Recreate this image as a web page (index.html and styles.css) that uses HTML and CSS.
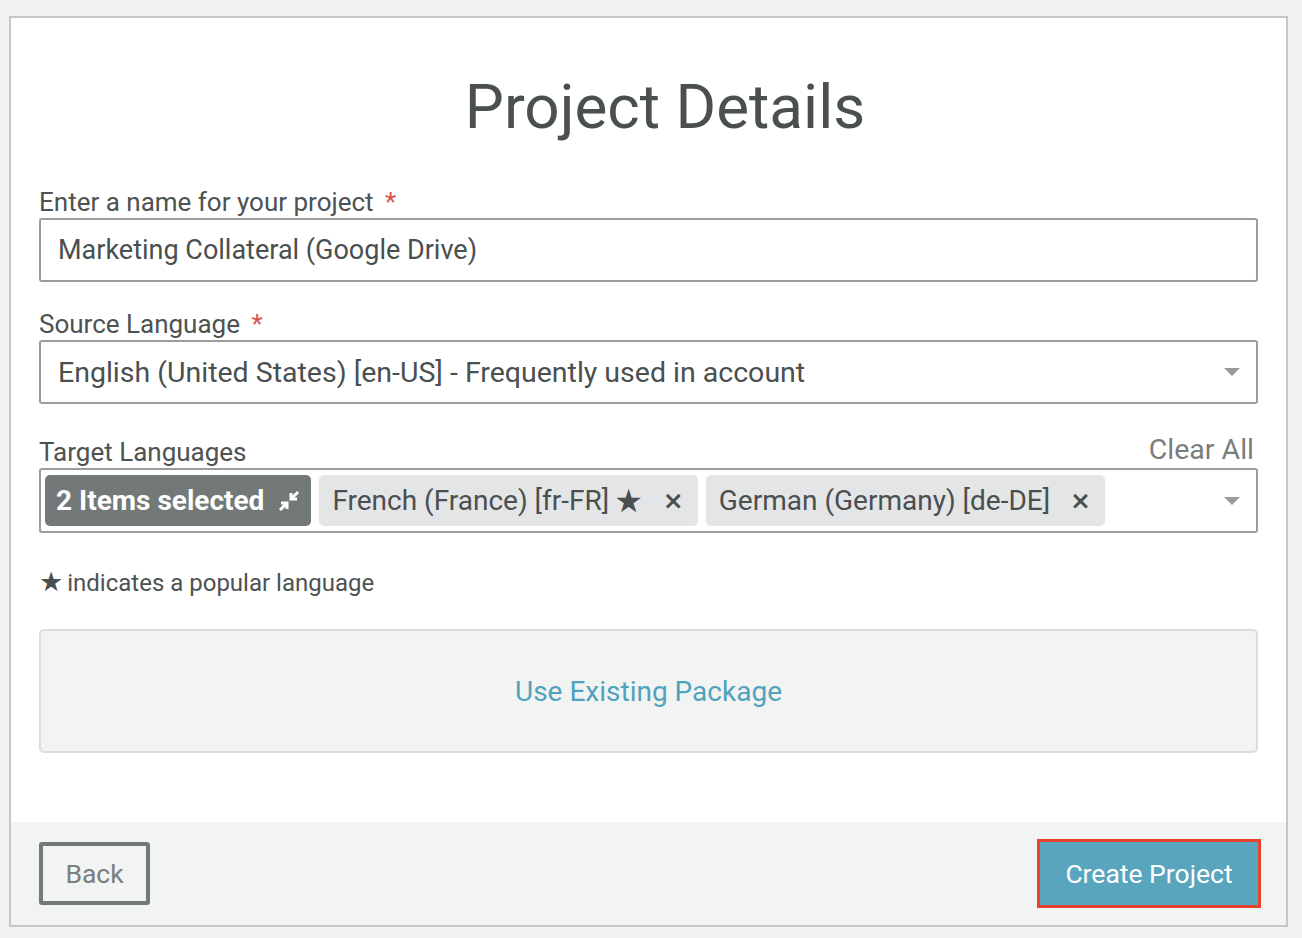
FILE: index.html
```html
<!DOCTYPE html>
<html lang="en">
<head>
    <meta charset="UTF-8">
    <title>Project Details</title>
    <link rel="stylesheet" href="styles.css">
</head>
<body>
    <div class="card">
        <div class="content">
            <h1>Project Details</h1>

            <div class="field">
                <label class="label">Enter a name for your project <span class="req">*</span></label>
                <div class="input">Marketing Collateral (Google Drive)</div>
            </div>

            <div class="field">
                <label class="label">Source Language <span class="req">*</span></label>
                <div class="input select">
                    <span>English (United States) [en-US] - Frequently used in account</span>
                    <span class="caret"></span>
                </div>
            </div>

            <div class="field field-target">
                <div class="label-row">
                    <label class="label">Target Languages</label>
                    <span class="clear-all">Clear All</span>
                </div>
                <div class="input select multi">
                    <div class="chips">
                        <span class="chip chip-count">2 Items selected
                            <svg class="compress" viewBox="0 0 24 24" width="24" height="24">
                                <polyline points="4 14 10 14 10 20"></polyline>
                                <polyline points="20 10 14 10 14 4"></polyline>
                                <line x1="14" y1="10" x2="21" y2="3"></line>
                                <line x1="3" y1="21" x2="10" y2="14"></line>
                            </svg>
                        </span>
                        <span class="chip">French (France) [fr-FR]<span class="star">★</span><span class="x">×</span></span>
                        <span class="chip">German (Germany) [de-DE]<span class="x">×</span></span>
                    </div>
                    <span class="caret"></span>
                </div>
            </div>

            <p class="note"><span class="star">★</span>indicates a popular language</p>

            <div class="package">Use Existing Package</div>
        </div>

        <div class="footer">
            <button class="btn btn-back">Back</button>
            <button class="btn btn-primary">Create Project</button>
        </div>
    </div>
</body>
</html>
```

FILE: styles.css
```css
body {
    margin: 0;
    background-color: #f2f2f2;
    font-family: Roboto, "Liberation Sans", sans-serif;
    color: #4a4f4f;
}

.card {
    margin: 16px 14px 0 9px;
    height: 911px;
    box-sizing: border-box;
    background-color: #fff;
    border: 2px solid #c4c7c5;
    display: flex;
    flex-direction: column;
}

.content {
    flex: 1;
    padding: 0 28px;
}

h1 {
    margin: 54px 0 45px;
    padding-left: 33px;
    text-align: center;
    font-weight: 400;
    font-size: 62px;
    line-height: 70px;
    color: #4a4f4f;
}

.field {
    margin-bottom: 27px;
}

.field-target {
    margin-top: 31px;
}

.label {
    display: block;
    font-size: 26px;
    line-height: 30px;
    margin-bottom: 1px;
    color: #4d5252;
}

.req {
    color: #d9534f;
    margin-left: 5px;
}

.label-row {
    display: flex;
    justify-content: space-between;
    align-items: flex-end;
}

.clear-all {
    font-size: 28.5px;
    line-height: 30px;
    color: #7a7e7e;
    margin-right: 4px;
    margin-bottom: 3px;
}

.input {
    height: 64px;
    box-sizing: border-box;
    border: 2px solid #9c9c9c;
    border-radius: 3px;
    padding: 0 17px;
    display: flex;
    align-items: center;
    font-size: 27px;
    color: #4a4f4f;
}

.select {
    justify-content: space-between;
    font-size: 28.5px;
}

.caret {
    width: 0;
    height: 0;
    border-left: 8px solid transparent;
    border-right: 8px solid transparent;
    border-top: 8px solid #9a9a9a;
    margin-right: -1px;
}

.multi {
    height: 65px;
    padding: 0 17px 0 4px;
}

.chips {
    display: flex;
    gap: 8px;
}

.chip {
    display: flex;
    align-items: center;
    height: 51px;
    box-sizing: border-box;
    padding: 0 14px 0 13px;
    background-color: #e4e5e6;
    border-radius: 5px;
    font-size: 28px;
    color: #4a4f4f;
}

.chip-count {
    background-color: #737879;
    color: #fff;
    font-weight: 700;
    padding: 0 10px 0 11px;
}

.compress {
    margin-left: 13px;
    fill: none;
    stroke: #fff;
    stroke-width: 3;
}

.star {
    font-family: "DejaVu Sans", sans-serif;
    font-size: 32px;
    color: #4a4f4f;
    margin-left: 5px;
}

.x {
    font-family: "DejaVu Sans", sans-serif;
    font-weight: 700;
    font-size: 25px;
    margin-left: 20px;
    color: #4a4f4f;
}

.note {
    margin: 35px 0 32px;
    font-size: 24px;
    line-height: 28px;
    color: #4d5252;
}

.note .star {
    margin: 0 4px 0 0;
    font-size: 27px;
}

.package {
    height: 124px;
    box-sizing: border-box;
    border: 2px solid #dcdede;
    border-radius: 5px;
    background-color: #f2f3f3;
    display: flex;
    align-items: center;
    justify-content: center;
    font-size: 28px;
    color: #4fa3bd;
}

.footer {
    background-color: #f2f3f3;
    padding: 20px 28px 20px;
    display: flex;
    justify-content: space-between;
}

.btn {
    height: 63px;
    font-family: inherit;
    font-size: 26.5px;
    border-radius: 3px;
}

.btn-back {
    width: 111px;
    background-color: #f2f3f3;
    border: 4px solid #737879;
    color: #7a7e7e;
}

.btn-primary {
    width: 218px;
    background-color: #58a5bd;
    border: none;
    border-radius: 0;
    color: #fff;
    outline: 3px solid #e5432d;
}
```
